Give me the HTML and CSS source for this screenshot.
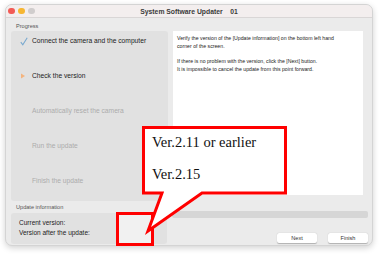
FILE: index.html
```html
<!DOCTYPE html>
<html lang="en">
<head>
    <meta charset="UTF-8">
    <title>System Software Updater</title>
    <link rel="stylesheet" href="styles.css">
</head>
<body>
    <div class="window">
        <div class="titlebar">
            <div class="lights">
                <span class="light red"></span>
                <span class="light yellow"></span>
                <span class="light off"></span>
            </div>
            <div class="title">System Software Updater&nbsp;&nbsp;&nbsp;&nbsp;01</div>
            <div></div>
        </div>

        <div class="main">
            <div class="top">
                <div class="progress-col">
                    <div class="label">Progress</div>
                    <div class="steps">
                        <div class="step done">
                            <span class="mark">
                                <svg width="8" height="9" viewBox="0 0 8 9"><path d="M0.8 5.2 L2.8 7.8 L7.2 0.8" fill="none" stroke="#7aa9cf" stroke-width="1.1"/></svg>
                            </span>
                            Connect the camera and the computer
                        </div>
                        <div class="step current">
                            <span class="mark">
                                <svg width="6" height="6" viewBox="0 0 6 6"><path d="M1 0.5 L5 3 L1 5.5 Z" fill="#f4b47e"/></svg>
                            </span>
                            Check the version
                        </div>
                        <div class="step"><span class="mark"></span>Automatically reset the camera</div>
                        <div class="step"><span class="mark"></span>Run the update</div>
                        <div class="step"><span class="mark"></span>Finish the update</div>
                    </div>
                </div>
                <div class="info-col">
                    <div class="message">
                        <p>Verify the version of the [Update information] on the bottom left hand<br>corner of the screen.</p>
                        <p>If there is no problem with the version, click the [Next] button.<br>It is impossible to cancel the update from this point forward.</p>
                    </div>
                </div>
            </div>

            <div class="bottom">
                <div class="update-col">
                    <div class="label">Update information</div>
                    <div class="versions">
                        <div>Current version:</div>
                        <div>Version after the update:</div>
                    </div>
                </div>
                <div class="actions">
                    <div class="bar"></div>
                    <div class="buttons">
                        <button class="btn">Next</button>
                        <button class="btn">Finish</button>
                    </div>
                </div>
            </div>
        </div>
    </div>

    <!-- annotation drawn over the window -->
    <svg class="callout" width="380" height="254" viewBox="0 0 380 254">
        <rect x="117.5" y="213.5" width="35" height="31" fill="#f1f1f1" stroke="#ff0000" stroke-width="3"/>
        <path d="M143.5 127.5 H285.5 V193 H202 L148 231 L162 193 H143.5 Z" fill="#ffffff" stroke="#ff0000" stroke-width="3"/>
    </svg>
    <div class="callout-text">
        <p>Ver.2.11 or earlier</p>
        <p>Ver.2.15</p>
    </div>
</body>
</html>
```

FILE: styles.css
```css
* {
    margin: 0;
    padding: 0;
    box-sizing: border-box;
}
body {
    font-family: "Liberation Sans", Arial, sans-serif;
    background: #ffffff;
    width: 380px;
    height: 254px;
    overflow: hidden;
}
.window {
    margin: 4px 0 0 5px;
    width: 368px;
    height: 242px;
    background: #ebebeb;
    border-radius: 7px;
    border: 1px solid #d4d4d4;
    box-shadow: 0 2px 6px rgba(0,0,0,0.18);
    display: flex;
    flex-direction: column;
    overflow: hidden;
}
.titlebar {
    height: 13px;
    background: #f3eeee;
    border-bottom: 1px solid #d9d6d6;
    display: grid;
    grid-template-columns: 1fr auto 1fr;
    align-items: center;
}
.lights {
    display: flex;
    gap: 3.5px;
    padding-left: 2px;
}
.light {
    width: 6.5px;
    height: 6.5px;
    border-radius: 50%;
}
.light.red { background: #f25a55; }
.light.yellow { background: #f6b632; }
.light.off { background: #d0cdcd; }
.title {
    font-size: 6.8px;
    font-weight: bold;
    color: #3a3a3a;
}
.main {
    flex: 1;
    padding: 2px 4px 0 5px;
    display: flex;
    flex-direction: column;
}
.label {
    font-size: 5.6px;
    color: #555;
    padding-left: 5px;
}
.top {
    display: flex;
}
.progress-col {
    width: 157px;
}
.progress-col .label {
    height: 11px;
    line-height: 12px;
}
.steps {
    height: 170px;
    background: #e1e1e1;
    border-radius: 3px;
    padding: 4px 0 0 9px;
    display: flex;
    flex-direction: column;
    gap: 23px;
}
.step {
    height: 12px;
    line-height: 12px;
    font-size: 6.7px;
    color: #acacac;
    display: flex;
    align-items: center;
}
.step.done,
.step.current {
    color: #222;
}
.mark {
    width: 12px;
    display: flex;
    align-items: center;
}
.info-col {
    flex: 1;
    padding: 11px 5px 0 5px;
}
.message {
    height: 164px;
    background: #ffffff;
    padding: 4px 4px;
    font-size: 5.2px;
    line-height: 7.5px;
    color: #222;
}
.message p {
    margin-bottom: 8px;
}
.bottom {
    display: flex;
}
.update-col {
    width: 156px;
}
.update-col .label {
    height: 12px;
    line-height: 12px;
}
.versions {
    height: 31px;
    background: #e1e1e1;
    border-radius: 3px;
    padding: 5px 0 0 8px;
    font-size: 6.5px;
    line-height: 10px;
    color: #222;
}
.actions {
    flex: 1;
    padding: 10px 0 0 5px;
}
.bar {
    height: 7px;
    background: #d6d6d6;
    border-radius: 2px;
}
.buttons {
    margin-top: 15px;
    display: flex;
    justify-content: flex-end;
    gap: 11px;
}
.btn {
    width: 40px;
    height: 10px;
    border: none;
    border-radius: 2px;
    background: #ffffff;
    box-shadow: 0 0.5px 1px rgba(0,0,0,0.25);
    font-family: "Liberation Sans", Arial, sans-serif;
    font-size: 5.6px;
    color: #333;
}
.callout {
    position: absolute;
    left: 0;
    top: 0;
}
.callout-text {
    position: absolute;
    left: 152px;
    top: 126px;
    font-family: "Liberation Serif", "Times New Roman", serif;
    font-size: 14.5px;
    line-height: 32px;
    color: #111;
}
```
